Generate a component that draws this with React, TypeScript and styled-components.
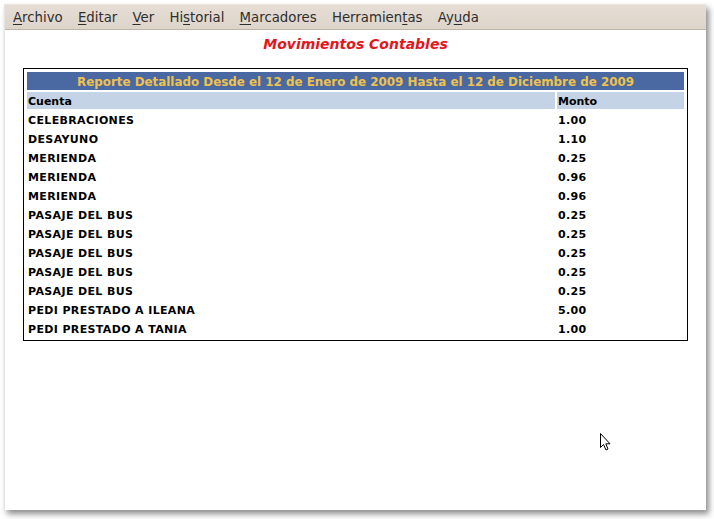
import React from 'react';
import styled, { createGlobalStyle } from 'styled-components';

const GlobalStyle = createGlobalStyle`
  html, body {
    margin: 0;
    padding: 0;
    background: #ffffff;
  }
  body {
    font-family: "DejaVu Sans", Verdana, sans-serif;
  }
`;

const Screen = styled.div`
  width: 714px;
  height: 519px;
  padding: 4px 0 0 4px;
  box-sizing: border-box;
  position: relative;
  overflow: hidden;
`;

const Window = styled.div`
  width: 701px;
  height: 506px;
  background: #ffffff;
  border-left: 1px solid #e4e4e4;
  box-shadow: 3px 4px 6px rgba(0, 0, 0, 0.45);
  display: flex;
  flex-direction: column;
`;

const MenuBar = styled.div`
  height: 24px;
  background: linear-gradient(#e6ded5, #ddd4ca);
  border-top: 1px solid #ece6df;
  border-bottom: 1px solid #bfb4a8;
  display: flex;
  align-items: center;
  padding-left: 8px;
  gap: 15.2px;
  font-size: 13.3px;
  color: #2e2e2e;
`;

const MenuItem = styled.span`
  u {
    text-decoration-thickness: 1px;
    text-underline-offset: 2px;
  }
`;

const Content = styled.div`
  flex: 1;
  display: flex;
  flex-direction: column;
  align-items: center;
`;

const Title = styled.h1`
  margin: 6px 0 0 0;
  font-size: 14px;
  font-weight: bold;
  font-style: italic;
  color: #e3161b;
  line-height: 17px;
`;

const Report = styled.table`
  width: 665px;
  margin-top: 15px;
  border: 1px solid #000000;
  border-spacing: 2px;
  padding: 1px;
  font-size: 11px;
  font-weight: bold;
  color: #000000;
`;

const Banner = styled.th`
  height: 16px;
  padding: 2px 0 0 0;
  background: #4a68a1;
  color: #edc24e;
  font-size: 11.9px;
  text-align: center;
`;

const Head = styled.th<{ $w?: number }>`
  height: 15px;
  padding: 2px 1px 0 1px;
  background: #c4d3e5;
  text-align: left;
  width: ${(p) => (p.$w ? `${p.$w}px` : 'auto')};
`;

const Cell = styled.td`
  height: 15px;
  padding: 2px 1px 0 1px;
  text-align: left;
  letter-spacing: 0.36px;
`;

const Cursor = styled.svg`
  position: absolute;
  left: 599px;
  top: 432px;
`;

const menus: [string, string, string][] = [
  ['', 'A', 'rchivo'],
  ['', 'E', 'ditar'],
  ['', 'V', 'er'],
  ['Hi', 's', 'torial'],
  ['', 'M', 'arcadores'],
  ['Herramien', 't', 'as'],
  ['Ay', 'u', 'da'],
];

const rows: [string, string][] = [
  ['CELEBRACIONES', '1.00'],
  ['DESAYUNO', '1.10'],
  ['MERIENDA', '0.25'],
  ['MERIENDA', '0.96'],
  ['MERIENDA', '0.96'],
  ['PASAJE DEL BUS', '0.25'],
  ['PASAJE DEL BUS', '0.25'],
  ['PASAJE DEL BUS', '0.25'],
  ['PASAJE DEL BUS', '0.25'],
  ['PASAJE DEL BUS', '0.25'],
  ['PEDI PRESTADO A ILEANA', '5.00'],
  ['PEDI PRESTADO A TANIA', '1.00'],
];

const App = () => {
  return (
    <Screen>
      <GlobalStyle />
      <Window>
        <MenuBar>
          {menus.map(([a, u, b]) => (
            <MenuItem key={a + u + b}>
              {a}
              <u>{u}</u>
              {b}
            </MenuItem>
          ))}
        </MenuBar>
        <Content>
          <Title>Movimientos Contables</Title>
          <Report>
            <thead>
              <tr>
                <Banner colSpan={2}>
                  Reporte Detallado Desde el 12 de Enero de 2009 Hasta el 12 de Diciembre de 2009
                </Banner>
              </tr>
              <tr>
                <Head>Cuenta</Head>
                <Head $w={125}>Monto</Head>
              </tr>
            </thead>
            <tbody>
              {rows.map(([name, amount], i) => (
                <tr key={i}>
                  <Cell>{name}</Cell>
                  <Cell>{amount}</Cell>
                </tr>
              ))}
            </tbody>
          </Report>
        </Content>
      </Window>
      <Cursor width="14" height="20" viewBox="0 0 14 20">
        <path
          d="M1.5 1.5 L1.5 15.5 L4.5 12.5 L7 18 L9 17 L6.8 11.8 L11 11.8 Z"
          fill="#ffffff"
          stroke="#000000"
          strokeWidth="1"
          strokeLinejoin="miter"
        />
      </Cursor>
    </Screen>
  );
};

export default App;
